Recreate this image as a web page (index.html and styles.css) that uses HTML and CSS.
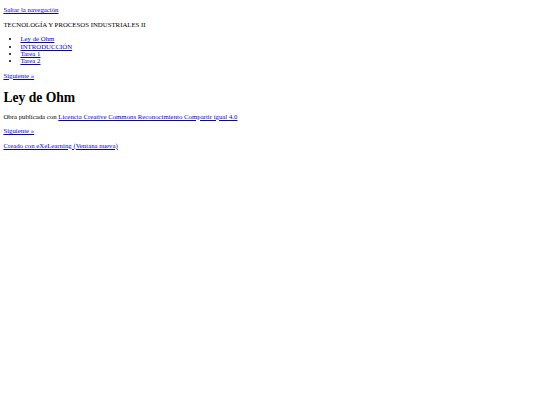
FILE: index.html
```html
<!DOCTYPE html>
<html lang="es">
<head>
    <meta charset="UTF-8">
    <link rel="stylesheet" href="styles.css">
    <title>Ley de Ohm</title>
</head>
<body>
<p class="skip"><a href="#main">Saltar la navegación</a></p>
<div id="header">
    <p>TECNOLOGÍA Y PROCESOS INDUSTRIALES II</p>
</div>
<ul id="nav">
    <li><a href="#">Ley de Ohm</a></li>
    <li><a href="#">INTRODUCCIÓN</a></li>
    <li><a href="#">Tarea 1</a></li>
    <li><a href="#">Tarea 2</a></li>
</ul>
<p class="pager"><a href="#">Siguiente »</a></p>
<div id="main">
    <h1>Ley de Ohm</h1>
    <p>Obra publicada con <a href="#">Licencia Creative Commons Reconocimiento Compartir igual 4.0</a></p>
    <p class="pager"><a href="#">Siguiente »</a></p>
    <p><a href="#">Creado con eXeLearning (Ventana nueva)</a></p>
</div>
</body>
</html>
```

FILE: styles.css
```css
body {
    margin: 0;
    padding: 3.4px;
    font-family: "Liberation Serif", "Times New Roman", serif;
    font-size: 6.8px;
    line-height: 7.4px;
    color: #000;
    background: #fff;
}
a {
    color: #0000ee;
}
p {
    margin: 7px 0;
}
.skip {
    margin-top: 3px;
}
ul {
    margin: 7px 0;
    padding-left: 17px;
}
h1 {
    font-size: 13.6px;
    line-height: 15.6px;
    margin: 10.5px 0 7.6px;
}
```
